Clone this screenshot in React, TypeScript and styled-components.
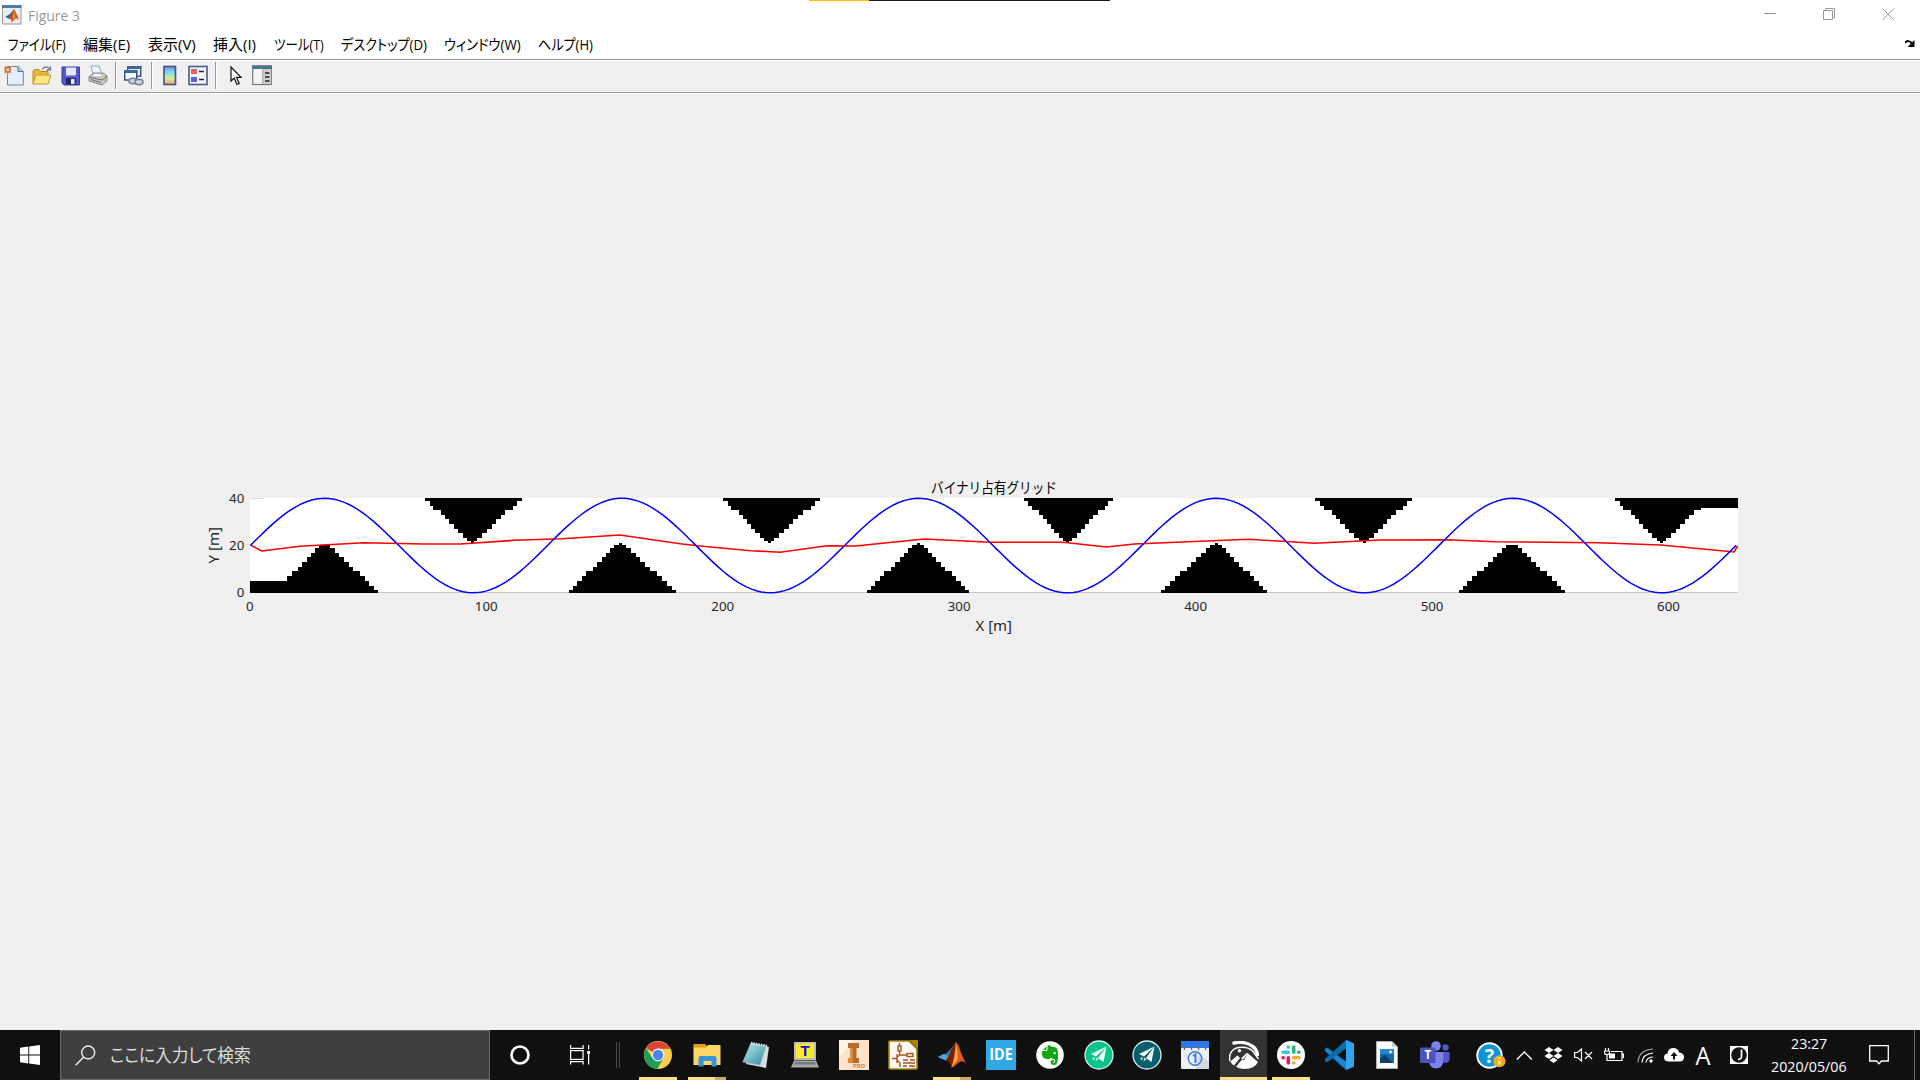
import React, { useLayoutEffect, useRef, useState } from "react";
import styled, { createGlobalStyle } from "styled-components";

const Global = createGlobalStyle`
  html, body { margin: 0; padding: 0; background: #f0f0f0; }
  * { box-sizing: border-box; }
`;

const uiFont = `"Open Sans", "Noto Sans CJK JP", sans-serif`;

const Screen = styled.div`
  position: relative;
  width: 1920px;
  height: 1080px;
  display: flex;
  flex-direction: column;
  overflow: hidden;
  background: #f0f0f0;
  font-family: ${uiFont};
`;

const DragStrip = styled.div`
  position: absolute;
  top: 0;
  left: 809px;
  width: 301px;
  height: 1px;
  background: linear-gradient(90deg, #ffb900 60px, #1b1b1b 60px);
`;

const TitleBar = styled.header`
  height: 29px;
  display: flex;
  align-items: center;
  padding: 0 25px 0 2px;
  background: #fff;
`;

const TitleIcon = styled.div`
  width: 20px;
  height: 20px;
  margin-right: 6px;
  svg { display: block; }
`;

const WindowButtons = styled.div`
  margin-left: auto;
  display: flex;
  gap: 46px;
  svg { display: block; }
`;

const MenuBar = styled.nav`
  height: 30px;
  display: flex;
  align-items: center;
  padding: 0 4px 1px 8px;
  background: #fff;
  color: #000;
`;

const MenuItem = styled.div<{ $gap: number }>`
  margin-right: ${(p) => p.$gap}px;
`;

const DockArrow = styled.div`
  margin-left: auto;
  svg { display: block; }
`;

const ToolBar = styled.div`
  height: 35px;
  display: flex;
  align-items: center;
  padding: 0 0 3px 4px;
  border-top: 1px solid #999;
  border-bottom: 1px solid #fff;
  box-shadow: inset 0 1px #fff, inset 0 -1px #999;
  background: #f0f0f0;
`;

const Tool = styled.div<{ $w: number; $after: number }>`
  width: ${(p) => p.$w}px;
  height: 21px;
  margin-right: ${(p) => p.$after}px;
  svg { display: block; }
`;

const ToolSep = styled.div<{ $after: number }>`
  width: 2px;
  height: 27px;
  margin-right: ${(p) => p.$after}px;
  border-left: 1px solid #999;
  border-right: 1px solid #fff;
`;

const Figure = styled.main`
  flex: 1;
  display: flex;
  justify-content: flex-start;
  align-items: flex-start;
  padding: 366px 0 0 190px;
  background: #f0f0f0;
  svg { display: block; }
`;

const TaskBar = styled.footer`
  height: 50px;
  display: flex;
  background: #101010;
  color: #fff;
`;

const StartButton = styled.div`
  width: 60px;
  display: flex;
  align-items: center;
  justify-content: center;
`;

const SearchBox = styled.div`
  width: 430px;
  height: 50px;
  display: flex;
  align-items: center;
  padding-left: 14px;
  gap: 14px;
  border: 1px solid #6b6b6b;
  background: #3f3f3f;
  color: #dcdcdc;
`;

const TaskButton = styled.div`
  width: 60px;
  display: flex;
  align-items: center;
  justify-content: center;
`;

const BandGrip = styled.div`
  width: 4px;
  height: 26px;
  margin: 12px 14px 0 6px;
  border-left: 1px solid #4a4a4a;
  border-right: 1px solid #4a4a4a;
`;

const AppSlot = styled.div<{ $wide: boolean; $active?: boolean }>`
  width: ${(p) => (p.$wide ? 49 : 48)}px;
  height: 50px;
  display: grid;
  grid-template-rows: 47px 3px;
  justify-items: center;
  align-items: center;
  padding-right: ${(p) => (p.$wide ? 1 : 0)}px;
  padding-left: ${(p) => (p.$active ? 1 : 0)}px;
  background: ${(p) => (p.$active ? "#333" : "transparent")};
  background-clip: content-box;
  svg { display: block; margin-top: 3px; }
`;

const RunLine = styled.div<{ $kind: "one" | "many" | "active" }>`
  width: ${(p) => (p.$kind === "active" ? "47px" : "38px")};
  height: 3px;
  background: ${(p) =>
    p.$kind === "many" ? "linear-gradient(90deg,#ffdf8c 27px,#c9ab6b 27px)" : "#ffdf8c"};
`;

const Tray = styled.div`
  flex: 1;
  display: flex;
  align-items: center;
  padding-left: 17px;
  svg { display: block; }
`;

const TrayItem = styled.div<{ $w: number; $after: number }>`
  width: ${(p) => p.$w}px;
  margin-right: ${(p) => p.$after}px;
`;

const Clock = styled.div`
  width: 78px;
  display: flex;
  flex-direction: column;
  align-items: center;
  margin-right: 21px;
`;

const DesktopEdge = styled.div`
  width: 6px;
  height: 50px;
  margin-left: auto;
  border-left: 1px solid #6a6a6a;
`;

const FitBox = styled.div<{ $w: number; $size: number; $lh: number; $color: string }>`
  width: ${(p) => p.$w}px;
  height: ${(p) => p.$lh}px;
  line-height: ${(p) => p.$lh}px;
  font-size: ${(p) => p.$size}px;
  color: ${(p) => p.$color};
  white-space: nowrap;
  font-feature-settings: "palt";
  span { display: inline-block; transform-origin: 0 50%; }
`;

/* Condenses a label so that it occupies exactly the given width. */
function Fit({ w, size, lh = 24, color = "inherit", children }: {
  w: number; size: number; lh?: number; color?: string; children: string;
}) {
  const ref = useRef<HTMLSpanElement>(null);
  const [scale, setScale] = useState(1);
  useLayoutEffect(() => {
    if (ref.current) setScale(w / ref.current.offsetWidth);
  }, [w, children]);
  return (
    <FitBox $w={w} $size={size} $lh={lh} $color={color}>
      <span ref={ref} style={{ transform: `scaleX(${scale})` }}>{children}</span>
    </FitBox>
  );
}

/* ---------- chart ---------- */

const X0 = 250.3;
const Y0 = 592.8;
const SX = 2.3645;
const SY = 2.3625;

const sine = Array.from({ length: 315 }, (_, i) => {
  const x = i * 2 + (i === 314 ? 0.4 : 0);
  return `${(X0 + x * SX).toFixed(2)},${(Y0 - (20 + 20 * Math.sin(x / 20)) * SY).toFixed(2)}`;
}).join(" ");

const path =
  "251,545.3 261.7,551 299.9,546.3 364.1,542.7 423.3,544 460.5,544 514.5,540.3 561.9,538.7 620,535 680.2,543.7 700,546 750.7,550.7 780.1,552.3 826.8,545.7 855.5,546 924,539 990.7,542.3 1063.4,542.3 1106.4,547 1134.4,544 1230,540 1249.3,539.3 1314.7,543.3 1380.1,540 1447.3,539.7 1495.5,541.7 1598.8,542.7 1660.8,545 1734.1,552 1737.6,546";

type Peak = { apex: number; left: number; right: number; flat?: boolean };
const lower: Peak[] = [
  { apex: 324.5, left: 275, right: 378, flat: true },
  { apex: 620, left: 569, right: 676 },
  { apex: 918, left: 867, right: 969 },
  { apex: 1216, left: 1161, right: 1267 },
  { apex: 1512, left: 1459, right: 1565, flat: true },
];
const upper: Peak[] = [
  { apex: 472, left: 425, right: 522 },
  { apex: 769, left: 723, right: 820 },
  { apex: 1067.5, left: 1024, right: 1113 },
  { apex: 1364, left: 1315, right: 1412 },
  { apex: 1661.5, left: 1615, right: 1710 },
];

const lowerRows = [543, 545, 548, 553, 557, 562, 567, 571, 576, 581, 586, 590, 593];
const lowerSpan = [0.02, 0.11, 0.19, 0.28, 0.36, 0.45, 0.53, 0.66, 0.75, 0.84, 0.92, 1];
const upperRows = [498, 501, 506, 510, 515, 519, 524, 529, 533, 538, 541, 543];
const upperSpan = [1, 0.9, 0.82, 0.66, 0.57, 0.48, 0.39, 0.3, 0.2, 0.1, 0.02];

function Stairs({ p, rows, span }: { p: Peak; rows: number[]; span: number[] }) {
  return (
    <>
      {span.map((t, i) => {
        if (p.flat && i === 0) return null;
        const l = Math.round(p.apex - Math.max(1.5, (p.apex - p.left) * t));
        const r = Math.round(p.apex + Math.max(1.5, (p.right - p.apex) * t));
        return <rect key={i} x={l} y={rows[i]} width={r - l} height={rows[i + 1] - rows[i]} />;
      })}
    </>
  );
}

function Chart() {
  return (
    <svg width="1560" height="180" viewBox="190 460 1560 180" fontFamily={`"Noto Sans", "Noto Sans CJK JP", sans-serif`} fontSize="13.3" fill="#262626">
      <rect x="250" y="498" width="1488" height="95" fill="#fff" />
      <g fill="#000" shapeRendering="crispEdges">
        <rect x="250" y="592" width="1488" height="1" fill="#c6c6c6" />
        <rect x="250" y="498" width="14" height="1" fill="#dcdcdc" />
        <rect x="250" y="581" width="40" height="12" />
        <rect x="1698" y="498" width="40" height="10" />
        {lower.map((p) => <Stairs key={p.apex} p={p} rows={lowerRows} span={lowerSpan} />)}
        {upper.map((p) => <Stairs key={p.apex} p={p} rows={upperRows} span={upperSpan} />)}
      </g>
      <polyline points={path} fill="none" stroke="#f00" strokeWidth="1.6" />
      <polyline points={sine} fill="none" stroke="#00f" strokeWidth="1.5" />
      {["0", "100", "200", "300", "400", "500", "600"].map((t, i) => (
        <text key={t} x={249.8 + i * 100 * SX} y="611" textAnchor="middle">{t}</text>
      ))}
      {["0", "20", "40"].map((t, i) => (
        <text key={t} x="244.3" y={597.3 - i * 47.3} textAnchor="end">{t}</text>
      ))}
      <text x="975.5" y="631" fontSize="14" textLength="36.5" lengthAdjust="spacingAndGlyphs">X [m]</text>
      <text transform="translate(219.3 563.5) rotate(-90)" fontSize="14" textLength="36.5" lengthAdjust="spacingAndGlyphs">Y [m]</text>
      <text x="931" y="492.5" fontSize="15" fill="#000" textLength="126" lengthAdjust="spacingAndGlyphs">バイナリ占有グリッド</text>
    </svg>
  );
}

/* ---------- icons ---------- */

const Membrane = ({ size }: { size: number }) => (
  <svg width={size} height={size} viewBox="0 0 32 32">
    <path d="M1 18 L10 14 Q14 11 20 2 L17 17 L11 22 Z" fill="#3a7fb5" />
    <path d="M1 18 L7 15 L14 18 L10 22 Z" fill="#55a5d0" />
    <path d="M20 2 Q16 7 14 13 Q12 19 9 22 Q13 21 16 30 Q19 26 21 17Z" fill="#7c1d12" />
    <path d="M20 2 Q23 4 25 12 Q28 20 31 25 Q27 21 23 24 Q19 28 15 30 Q18 22 20 2Z" fill="#e35a1c" />
    <path d="M20 4 Q20 18 16 28 Q19 26 22 20 Q22 10 20 4Z" fill="#f8b13c" />
  </svg>
);

const FigureIcon = () => (
  <svg width="20" height="20" viewBox="0 0 20 20">
    <rect x=".5" y=".5" width="18.500" height="18.500" fill="#ececec" stroke="#9a9a9a" />
    <rect x="0" y="0" width="19.500" height="3" fill="#4b7da3" />
    <path d="M3 12 L8 9 L12 4 L10 12 L8 14Z" fill="#2a6a9a" />
    <path d="M12 4 Q14 7 17 15 L14 13 L10 17 L8 13 Z" fill="#d9501d" />
    <path d="M12 5 L11 15 L13 12Z" fill="#f6a83b" />
  </svg>
);

const NewIcon = () => (
  <svg width="20" height="21" viewBox="0 0 20 21">
    <path d="M3.500 1.500 H14 L19.300 6.500 V20 H3.500Z" fill="#e3effd" stroke="#7084ac" />
    <path d="M14 1.500 V6.500 H19.300" fill="#b9cdec" stroke="#4c679c" />
    <path d="M0 1 L8 9 M8 1 L0 9 M4 0 V10 M0 5 H8" stroke="#eeb99c" strokeWidth="1" />
    <rect x="1.500" y="2.500" width="4.500" height="4.500" fill="#f9d7a0" stroke="#d65a28" strokeWidth="1.400" />
  </svg>
);

const OpenIcon = () => (
  <svg width="20" height="21" viewBox="0 0 20 21">
    <path d="M1 19 V6 L3 4.500 H7 L9 6.500 H16 V10" fill="#e9b93e" stroke="#b98a1c" />
    <path d="M1 19 L4 10 H19 L16 19Z" fill="#ffe680" stroke="#c79a2c" />
    <path d="M10 4 Q14 0 18 4 M18.500 1 V5 H14.500" fill="none" stroke="#6f8796" strokeWidth="1.300" />
  </svg>
);

const SaveIcon = () => (
  <svg width="20" height="21" viewBox="0 0 20 21">
    <path d="M1 2 H18.500 V20 H3 L1 18Z" fill="#5358cc" stroke="#3a3f9e" />
    <rect x="5" y="2.500" width="10" height="8" fill="#e4e9fb" />
    <rect x="5" y="13" width="10" height="6.500" fill="#23285f" />
    <rect x="10" y="14" width="3.500" height="5" fill="#e8ecf8" />
  </svg>
);

const PrintIcon = () => (
  <svg width="20" height="21" viewBox="0 0 20 21">
    <path d="M5 9 L3 1 H11 L14 9Z" fill="#edf4fb" stroke="#9ba7b5" />
    <path d="M1 12 L5 8 H15 L19 11 V16 L14 20 L1 16Z" fill="#c9c9c9" stroke="#888" />
    <path d="M1 12 L14 15 L19 11 M3 14.500 L13 17.500" fill="none" stroke="#666" />
    <path d="M6 10 H13" stroke="#f8f8f8" strokeWidth="2" />
    <circle cx="16.500" cy="14.500" r="1" fill="#c4a339" />
  </svg>
);

const LinkIcon = () => (
  <svg width="20" height="21" viewBox="0 0 20 21">
    <rect x="3.700" y="1.700" width="13" height="9.500" fill="#eaf1fb" stroke="#2f4c86" strokeWidth="1.400" />
    <rect x="3" y="1" width="14.500" height="3" fill="#3e62a2" />
    <rect x=".7" y="6" width="12" height="9" fill="#f5f9ff" stroke="#2f4c86" strokeWidth="1.400" />
    <rect x="0" y="5" width="13.500" height="3" fill="#3e62a2" />
    <g fill="#c8d4e2" stroke="#6e8198" strokeWidth="1.500">
      <ellipse cx="9" cy="16" rx="4" ry="2.700" />
      <ellipse cx="15" cy="17" rx="4" ry="2.700" />
    </g>
  </svg>
);

const ColorbarIcon = () => (
  <svg width="14" height="21" viewBox="0 0 14 21">
    <defs>
      <linearGradient id="cbar" x1="0" y1="0" x2="0" y2="1">
        <stop offset="0" stopColor="#8c8fe0" /><stop offset=".35" stopColor="#7fdcf0" />
        <stop offset=".65" stopColor="#d7ec90" /><stop offset="1" stopColor="#f2a07e" />
      </linearGradient>
    </defs>
    <rect x="1" y="1.500" width="11.500" height="18" fill="url(#cbar)" stroke="#3f5280" strokeWidth="1.600" />
  </svg>
);

const LegendIcon = () => (
  <svg width="20" height="21" viewBox="0 0 20 21">
    <rect x="1" y="1.500" width="18" height="18" fill="#f1f5ff" stroke="#475c8e" strokeWidth="1.600" />
    <rect x="3" y="4" width="6" height="5" fill="#e3605f" /><rect x="3" y="12" width="6" height="5" fill="#5f5fe3" />
    <path d="M11 6.500 H16 M11 14.500 H16" stroke="#222" strokeWidth="1.300" />
  </svg>
);

const PointerIcon = () => (
  <svg width="12" height="21" viewBox="0 0 12 21">
    <path d="M1 2 V16 L4.200 13 L7 19.500 L9.200 18.500 L6.500 12.300 H11Z" fill="#fff" stroke="#111" strokeWidth="1.200" />
  </svg>
);

const PanelIcon = () => (
  <svg width="20" height="21" viewBox="0 0 20 21">
    <rect x=".7" y="1" width="18.600" height="18.500" fill="#f3f3f3" stroke="#777" strokeWidth="1.200" />
    <rect x="0" y=".5" width="20" height="3.500" fill="#4a7390" />
    <path d="M11 4 V19" stroke="#777" /><rect x="11.500" y="4" width="7.300" height="15" fill="#cfcfcf" />
    <path d="M13 8 H17.500 M13 12 H17.500 M13 16 H17.500" stroke="#222" strokeWidth="1.300" />
  </svg>
);

const Win = () => (
  <svg width="20" height="20" viewBox="0 0 20 20" fill="#fff">
    <path d="M0 2.800 L8.300 1.600 V9.500 H0Z M9.200 1.400 L20 0 V9.500 H9.200Z M0 10.400 H8.300 V18.400 L0 17.200Z M9.200 10.400 H20 V20 L9.200 18.500Z" />
  </svg>
);

const Magnifier = () => (
  <svg width="21" height="21" viewBox="0 0 21 21" fill="none" stroke="#eee" strokeWidth="1.400">
    <circle cx="13.200" cy="7.500" r="6.500" /><path d="M8.500 12.200 L.6 20.200" />
  </svg>
);

const TaskView = () => (
  <svg width="20" height="20" viewBox="0 0 20 20" fill="none" stroke="#fff" strokeWidth="1.200">
    <rect x=".6" y="5.600" width="12.500" height="8.800" />
    <path d="M.6 0 V3.400 H13.100 V0 M.6 19.500 V16.600 H13.100 V19.500 M18.600 0 V4.500 M18.600 9 V19.500" />
    <rect x="17.200" y="6" width="2.800" height="3" fill="#fff" stroke="none" />
  </svg>
);

const Chrome = () => (
  <svg width="28" height="28" viewBox="0 0 28 28">
    <circle cx="14" cy="14" r="14" fill="#fdd04b" />
    <path d="M14 14 L1.900 7 A14 14 0 0 1 26.100 7.700 H14Z" fill="#db4437" />
    <path d="M1.900 7 A14 14 0 0 0 13.200 28 L19.500 17.200 L14 14 L8.500 17.200Z" fill="#1e9c5a" />
    <circle cx="14" cy="14" r="6.400" fill="#f4f4f4" /><circle cx="14" cy="14" r="5.200" fill="#4a86f0" />
  </svg>
);

const Explorer = () => (
  <svg width="28" height="24" viewBox="0 0 28 24">
    <path d="M.5 1 H12 L14 3 V6 H.5Z" fill="#e0a10e" />
    <path d="M.5 4.500 H13 L15 2 H27.500 V22 H.5Z" fill="#ffd768" />
    <path d="M5.500 23.500 V15 Q5.500 13 7.500 13 H21.500 Q23.500 13 23.500 15 V23.500 H18.500 V18 H10.500 V23.500Z" fill="#3a94d6" />
  </svg>
);

const Notepad = () => (
  <svg width="28" height="28" viewBox="0 0 28 28">
    <defs><linearGradient id="npad" x1="0" y1="0" x2="1" y2="1"><stop offset="0" stopColor="#c3edf5" /><stop offset="1" stopColor="#2c8a9a" /></linearGradient></defs>
    <path d="M10 2 L27 6 L24 27 L4 23Z" fill="#d9dde0" />
    <path d="M9 2 L24 5 L18 24 L.8 21Z" fill="url(#npad)" stroke="#92b4ba" strokeWidth=".7" />
    <path d="M9 2 L25 5" stroke="#dde2e4" strokeWidth="2.500" strokeDasharray="1.500 1" />
  </svg>
);

const TeraTerm = () => (
  <svg width="28" height="26" viewBox="0 0 28 26">
    <rect x="3" y="0" width="22" height="18" fill="#bbb" /><rect x="5" y="1.500" width="18" height="14.500" fill="#fbe92c" />
    <path d="M3 18.500 H25 L28 25.500 H0Z" fill="#a8a8a8" /><path d="M4 20 H24 L25 22.500 H3Z" fill="#777" />
    <text x="14" y="13.700" fontFamily="Liberation Sans" fontWeight="700" fontSize="15" textAnchor="middle" fill="#0b12d8">T</text>
  </svg>
);

const Inventor = () => (
  <svg width="30" height="30" viewBox="0 0 30 30">
    <rect width="30" height="30" fill="#fde3cc" /><path d="M0 0 H14 L0 18Z" fill="#fff2e6" />
    <path d="M9 3 H20 V8 H17.500 V18 H20 V23 H9 V18 H11.500 V8 H9Z" fill="#b96a27" />
    <path d="M11.500 8 H14 V23 H9 V18 H11.500Z" fill="#d98b43" />
    <text x="26" y="28" fontFamily="Liberation Sans" fontWeight="700" fontSize="5.500" textAnchor="end" fill="#e07b24">PRO</text>
  </svg>
);

const Circuit = () => (
  <svg width="30" height="30" viewBox="0 0 30 30">
    <path d="M2 1 H21 L29 9 V28 Q29 29 28 29 H2 Q1 29 1 28 V2Q1 1 2 1Z" fill="#fdfaf4" stroke="#a88209" strokeWidth="1.600" />
    <path d="M21 0 H30 V9Z" fill="#a88209" />
    <g fill="none" stroke="#a4531f" strokeWidth="1.400">
      <path d="M11.500 3 V6 M11.500 11 V15 M11.500 15 H19 M4 18.500 H9 M9 14 V23 M9 17 L12 15 M9 20 L12 23 V27" />
      <rect x="10" y="6" width="3" height="5" /><rect x="19" y="13.500" width="6" height="3" />
      <path d="M15 20 H20 M22 20 H27 M15 23 H27 M15 26 H19 M21 26 H27" strokeWidth="1.700" />
    </g>
  </svg>
);

const Ide = () => (
  <svg width="30" height="30" viewBox="0 0 30 30">
    <rect width="30" height="30" fill="#2fa8e6" />
    <text x="15" y="20" fontFamily="Open Sans" fontWeight="700" fontSize="16" textAnchor="middle" textLength="23.500" lengthAdjust="spacingAndGlyphs" fill="#fff">IDE</text>
  </svg>
);

const Evernote = () => (
  <svg width="28" height="28" viewBox="0 0 28 28">
    <circle cx="14" cy="14" r="13.800" fill="#fff" />
    <path d="M6 10 L11 5 Q14 3.500 15 5.500 Q19 5.500 21 7.500 Q23 13 21.500 20 Q21 24 18 24 Q14.500 24 14.500 20.500 Q15 18.500 18 19 V21 Q16.500 21 17 22 Q19.500 22 19 18.500 Q16.500 18.500 15 16.500 Q13.500 19 10.500 18 Q5 17.500 6 10Z" fill="#14a614" />
    <path d="M6 9.500 H11 V4.500" fill="none" stroke="#fff" strokeWidth="1" /><circle cx="18.600" cy="12.200" r="1.100" fill="#fff" />
  </svg>
);

const Plane = ({ fill }: { fill: string }) => (
  <svg width="30" height="30" viewBox="0 0 30 30">
    <circle cx="15" cy="15" r="14" fill={fill} stroke="#dcefee" strokeWidth="1.300" />
    <path d="M22.500 6.500 L7 14 L12 16.500 L22.500 6.500 L14 18 L19.500 22Z" fill="#f4fffb" />
    <path d="M12.500 17.500 L14.500 19 L11.500 21.500Z M8 18 L11 17.500 L10 20.500Z" fill="#e6f7f2" />
  </svg>
);

const Calendar = () => (
  <svg width="28" height="28" viewBox="0 0 28 28">
    <rect width="28" height="28" rx="1.500" fill="#eef0f3" /><path d="M1.500 0 H26.500 Q28 0 28 1.500 V7 H0 V1.500 Q0 0 1.500 0Z" fill="#2f76ea" />
    <path d="M18 13 L28 21 V28 H15Z" fill="#d5d8dd" />
    <g stroke="#666" strokeWidth="1.300"><path d="M3.500 5 V9 M10.500 5 V9 M17.500 5 V9 M24.500 5 V9" /></g>
    <circle cx="14" cy="17.500" r="6.700" fill="none" stroke="#3d7be8" strokeWidth="1.400" />
    <path d="M12 15 L14.500 13.500 V22" fill="none" stroke="#3d7be8" strokeWidth="2" />
  </svg>
);

const Mountain = () => (
  <svg width="30" height="28" viewBox="0 0 30 28">
    <path d="M1.300 20.500 L8.500 14.500 L11 17 L5 24.500 Q2.500 23 1.300 20.500Z" fill="#fff" />
    <path d="M7 25.700 L13 18.500 L15 19.500 L18.500 12 L29 21 Q25.500 28 16 28 Q10.500 28 7 25.700Z" fill="#fff" />
    <path d="M12 17.500 L17.500 12 L18.500 12.500 L14.500 18.500Z" fill="#fff" />
    <path d="M1 20 Q-.8 13 4.500 8.500 Q6.500 7 9.500 6.500 Q20 5.500 24.500 11 L29.500 18" fill="none" stroke="#fff" strokeWidth="1.500" />
    <path d="M3.500 2.500 Q15 -.5 23 5 Q28.500 8.500 28.500 15" fill="none" stroke="#fff" strokeWidth="3.300" />
    <circle cx="10.500" cy="9.800" r="1.700" fill="#fff" />
  </svg>
);

const Slack = () => (
  <svg width="28" height="28" viewBox="0 0 28 28">
    <circle cx="14" cy="14" r="14" fill="#fff" />
    <g strokeWidth="3.600" strokeLinecap="round">
      <path d="M11.300 6 V6.300 M6 11.300 H11.300" stroke="#36c5f0" /><path d="M16.700 6 V11.300 M22 11.300 H21.700" stroke="#2eb67d" />
      <path d="M16.700 16.700 H22 M16.700 22 V21.700" stroke="#ecb22e" /><path d="M11.300 16.700 V22 M6 16.700 H6.300" stroke="#e01e5a" />
    </g>
  </svg>
);

const VsCode = () => (
  <svg width="30" height="30" viewBox="0 0 30 30">
    <path d="M22 0 L30 3.500 V26.500 L22 30 L1.500 11.500 Q0 10 1 9 L3 7.500 L22 21.500Z" fill="#1485ce" />
    <path d="M22 0 L1.500 18.500 Q0 20 1 21 L3 22.500 L22 8.500Z" fill="#0b6cb0" />
    <path d="M22 0 L30 3.500 V26.500 L22 30Z" fill="#30a5ee" />
  </svg>
);

const Photo = () => (
  <svg width="22" height="28" viewBox="0 0 22 28">
    <path d="M.5 .5 H16 L21.500 6 V27.500 H.5Z" fill="#fafafa" stroke="#bbb" strokeWidth=".8" /><path d="M16 .5 V6 H21.500" fill="#ccc" />
    <rect x="4" y="8" width="14" height="14" fill="#1769ac" /><path d="M4 8 H18 V13 H4Z" fill="#2487cf" /><path d="M4 22 V18 L8.500 13.500 L17 22Z" fill="#0d3f6d" /><circle cx="14.500" cy="11" r="1.400" fill="#fff" />
  </svg>
);

const Teams = () => (
  <svg width="30" height="28" viewBox="0 0 30 28">
    <circle cx="25.500" cy="6.500" r="3.200" fill="#5059c9" /><path d="M21 11 H29.500 V18 Q29 22.500 24 22Z" fill="#5059c9" />
    <circle cx="16" cy="5" r="4.800" fill="#7b83eb" /><path d="M9 11 H23.500 V20 Q22.500 27.500 16 27.500 Q10 27 9 21Z" fill="#7b83eb" />
    <rect x="0" y="6.500" width="15.500" height="15.500" rx="1" fill="#4b53bc" />
    <text x="7.800" y="18.200" fontFamily="Open Sans" fontWeight="700" fontSize="11.500" textAnchor="middle" fill="#fff">T</text>
  </svg>
);

const Help = () => (
  <svg width="30" height="27" viewBox="0 0 30 27">
    <circle cx="13.500" cy="13.500" r="13.200" fill="#fff" /><circle cx="13.500" cy="13.500" r="11.300" fill="#0d96d6" />
    <text x="13.500" y="20.500" fontFamily="Open Sans" fontWeight="700" fontSize="20" textAnchor="middle" fill="#fff">?</text>
    <circle cx="23.500" cy="19.300" r="6" fill="#f8ab1b" /><path d="M23.500 18.500 V23" stroke="#fff" strokeWidth="1.800" /><circle cx="23.500" cy="16.200" r="1.100" fill="#fff" />
  </svg>
);

const apps: { icon: React.ReactNode; run?: "one" | "many" | "active" }[] = [
  { icon: <Chrome />, run: "one" },
  { icon: <Explorer />, run: "many" },
  { icon: <Notepad /> },
  { icon: <TeraTerm /> },
  { icon: <Inventor /> },
  { icon: <Circuit /> },
  { icon: <Membrane size={30} />, run: "many" },
  { icon: <Ide /> },
  { icon: <Evernote /> },
  { icon: <Plane fill="#05c588" /> },
  { icon: <Plane fill="#07606e" /> },
  { icon: <Calendar /> },
  { icon: <Mountain />, run: "active" },
  { icon: <Slack />, run: "one" },
  { icon: <VsCode /> },
  { icon: <Photo /> },
  { icon: <Teams /> },
];

const menus: [string, number, number][] = [
  ["ファイル(F)", 58, 17],
  ["編集(E)", 47, 18],
  ["表示(V)", 48, 17],
  ["挿入(I)", 43, 18],
  ["ツール(T)", 50, 17],
  ["デスクトップ(D)", 86, 17],
  ["ウィンドウ(W)", 77, 17],
  ["ヘルプ(H)", 55, 0],
];

export default function App() {
  return (
    <Screen>
      <Global />
      <TitleBar>
        <TitleIcon><FigureIcon /></TitleIcon>
        <Fit w={52} size={15} color="#999">Figure 3</Fit>
        <WindowButtons>
          <svg width="13" height="13" fill="none" stroke="#999"><path d="M0 5.500 H12" /></svg>
          <svg width="13" height="13" fill="none" stroke="#999"><path d="M.5 2.500 H9.500 V11.500 H.5Z M2.500 2.500 V.5 H11.500 V9.500 H9.500" /></svg>
          <svg width="13" height="13" fill="none" stroke="#999"><path d="M.5 .5 L12 12 M12 .5 L.5 12" /></svg>
        </WindowButtons>
      </TitleBar>
      <MenuBar>
        {menus.map(([label, w, gap]) => (
          <MenuItem key={label} $gap={gap}><Fit w={w} size={15}>{label}</Fit></MenuItem>
        ))}
        <DockArrow>
          <svg width="11" height="8" viewBox="0 0 11 8"><path d="M0 3 Q3 -1 7 3.500" fill="none" stroke="#000" strokeWidth="2" /><path d="M9.500 0 V7 H2.500Z" fill="#000" /></svg>
        </DockArrow>
      </MenuBar>
      <ToolBar>
        <Tool $w={20} $after={8}><NewIcon /></Tool>
        <Tool $w={20} $after={9}><OpenIcon /></Tool>
        <Tool $w={20} $after={7}><SaveIcon /></Tool>
        <Tool $w={20} $after={7}><PrintIcon /></Tool>
        <ToolSep $after={7} />
        <Tool $w={20} $after={7}><LinkIcon /></Tool>
        <ToolSep $after={10} />
        <Tool $w={14} $after={11}><ColorbarIcon /></Tool>
        <Tool $w={20} $after={7}><LegendIcon /></Tool>
        <ToolSep $after={13} />
        <Tool $w={12} $after={10}><PointerIcon /></Tool>
        <Tool $w={20} $after={0}><PanelIcon /></Tool>
      </ToolBar>
      <Figure><Chart /></Figure>
      <TaskBar>
        <StartButton><Win /></StartButton>
        <SearchBox>
          <Magnifier />
          <Fit w={141} size={18} lh={28}>ここに入力して検索</Fit>
        </SearchBox>
        <TaskButton><svg width="20" height="20"><circle cx="10" cy="10" r="8.500" fill="none" stroke="#fff" strokeWidth="2.600" /></svg></TaskButton>
        <TaskButton><TaskView /></TaskButton>
        <BandGrip />
        {apps.map((a, i) => (
          <AppSlot key={i} $wide={i < 9} $active={a.run === "active"}>
            {a.icon}
            {a.run && <RunLine $kind={a.run} />}
          </AppSlot>
        ))}
        <Tray>
          <TrayItem $w={30} $after={10}><Help /></TrayItem>
          <TrayItem $w={17} $after={11}><svg width="17" height="11" fill="none" stroke="#fff" strokeWidth="1.300"><path d="M.8 9.500 L8.300 2 L15.800 9.500" /></svg></TrayItem>
          <TrayItem $w={19} $after={11}>
            <svg width="19" height="17" viewBox="0 0 19 17" fill="#fff"><path d="M5 0 L9.500 3 L5 6 L.5 3Z M14 0 L18.500 3 L14 6 L9.500 3Z M5 6 L9.500 9 L5 12 L.5 9Z M14 6 L18.500 9 L14 12 L9.500 9Z M9.500 10.500 L13.500 13.200 L9.500 16 L5.500 13.200Z" /></svg>
          </TrayItem>
          <TrayItem $w={19} $after={11}>
            <svg width="19" height="14" viewBox="0 0 19 14" fill="none" stroke="#fff" strokeWidth="1.200"><path d="M.6 4.500 H3.500 L7.500 1 V13 L3.500 9.500 H.6Z M11 4 L18 11 M18 4 L11 11" /></svg>
          </TrayItem>
          <TrayItem $w={20} $after={13}>
            <svg width="20" height="15" viewBox="0 0 20 15" fill="none" stroke="#fff" strokeWidth="1.200"><path d="M1.500 0 V3 M4.500 0 V3 M0 3 H5.500 V5 Q5.500 6.500 3 6.500 Q.6 6.500 .6 5 V3 M3 6.500 V12.500 H18 V3.500 H7 M18.500 6 H19.400 V10" /><rect x="5" y="5.500" width="6" height="5" fill="#fff" stroke="none" /></svg>
          </TrayItem>
          <TrayItem $w={17} $after={10}>
            <svg width="17" height="17" viewBox="0 0 17 17" fill="none" stroke="#fff" strokeWidth="1.200"><path d="M1 15.500 Q1.500 3 16 2" stroke="#aaa" /><path d="M5 15.500 Q5.500 7 16 6 M9 15.500 Q9.500 10.500 16 10" /><circle cx="14" cy="14" r="1.700" fill="#fff" stroke="none" /></svg>
          </TrayItem>
          <TrayItem $w={20} $after={11}>
            <svg width="20" height="14" viewBox="0 0 20 14"><path d="M5 13.500 Q0 13.500 0 9.500 Q0 6 3.500 5.500 Q4 0 9.500 0 Q14 0 15 4.500 Q20 5 20 9 Q20 13.500 15.500 13.500Z" fill="#fff" /><path d="M10 4 L13.500 8 H11 V11.500 H9 V8 H6.500Z" fill="#101010" /></svg>
          </TrayItem>
          <TrayItem $w={16} $after={19}>
            <svg width="16" height="40" viewBox="0 0 16 40"><text x="8" y="30" fontFamily="Open Sans" fontSize="26" textAnchor="middle" textLength="15" lengthAdjust="spacingAndGlyphs" fill="#fff">A</text></svg>
          </TrayItem>
          <TrayItem $w={18} $after={22}>
            <svg width="18" height="18"><rect width="18" height="18" fill="#fff" /><circle cx="9" cy="9" r="7.800" fill="#151515" /><path d="M11.500 3.500 V10.500 Q11.500 13.500 8 13.300" fill="none" stroke="#fff" strokeWidth="1.700" /></svg>
          </TrayItem>
          <Clock>
            <Fit w={36} size={15} lh={23}>23:27</Fit>
            <Fit w={76} size={15} lh={23}>2020/05/06</Fit>
          </Clock>
          <svg width="20" height="20" fill="none" stroke="#fff" strokeWidth="1.300"><path d="M.7 .7 H19.300 V16 H12.500 L10 18.800 L7.500 16 H.7Z" /></svg>
          <DesktopEdge />
        </Tray>
      </TaskBar>
      <DragStrip />
    </Screen>
  );
}
